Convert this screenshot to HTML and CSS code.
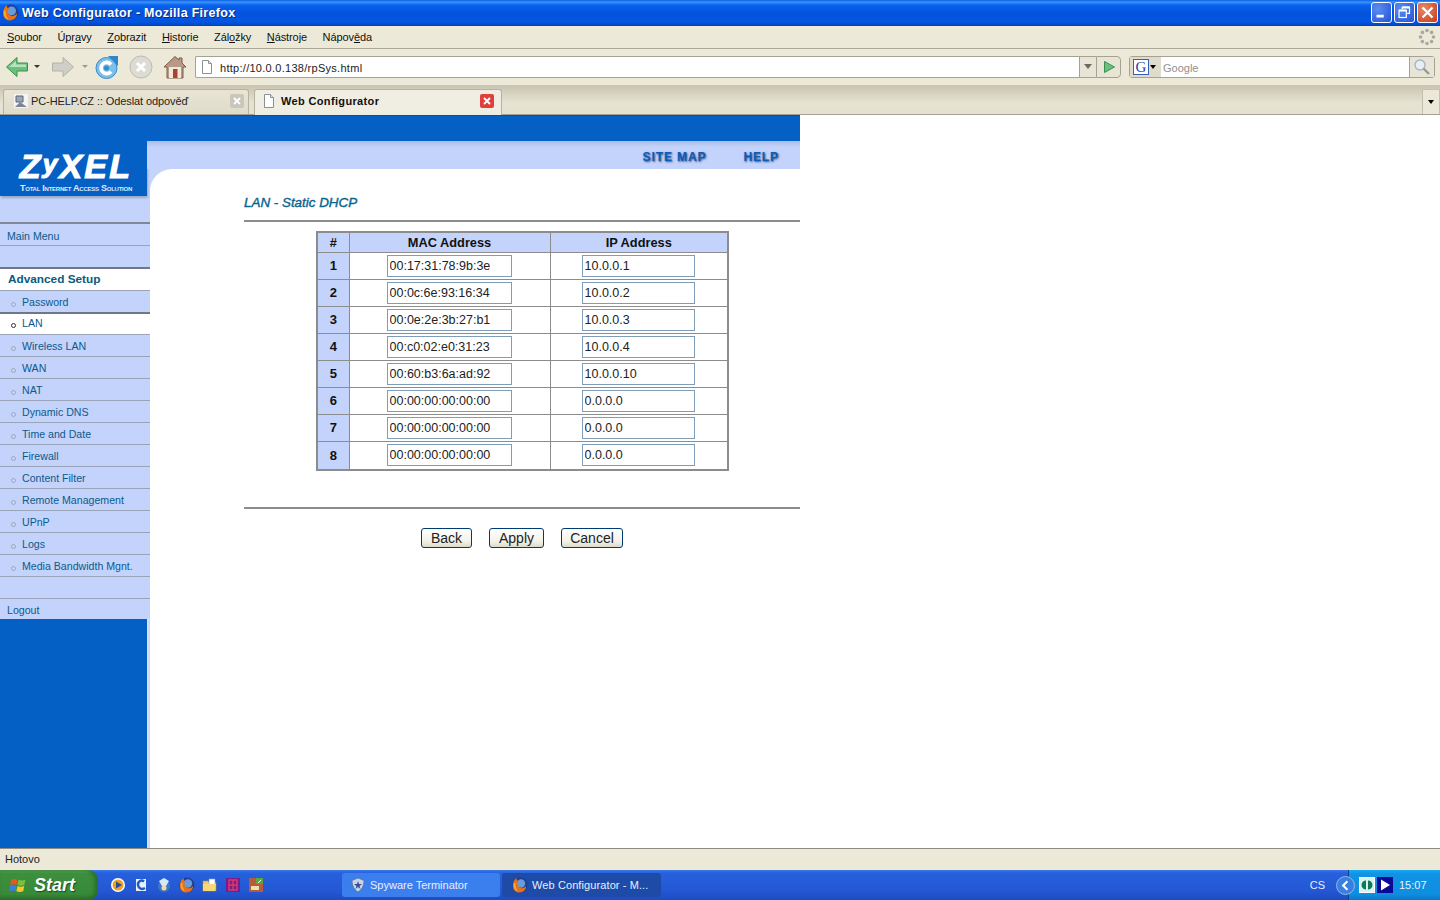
FILE: index.html
```html
<!DOCTYPE html>
<html lang="cs">
<head>
<meta charset="utf-8">
<title>Web Configurator - Mozilla Firefox</title>
<link rel="stylesheet" href="styles.css">
</head>
<body>
<svg class="defs" width="0" height="0" aria-hidden="true">
  <defs>
    <symbol id="fox" viewBox="0 0 16 16">
      <circle cx="8" cy="8" r="7.5" fill="#1c3f8f"/>
      <circle cx="9" cy="6.5" r="4.200" fill="#6a9cdc"/>
      <path d="M1 9C1 4 3 2 5 1 4 3 5 4 7 4 5 5 5 8 7 10c2 2 5 1.500 7-1 .5 3-2.500 6.500-6.500 6.500S1 13 1 9z" fill="#e8701a"/>
      <path d="M2 6c-1 3 0 7 4 8.500C4 12 3 9 3.500 6z" fill="#f6b02c"/>
    </symbol>
    <symbol id="page" viewBox="0 0 16 16">
      <path d="M3.500 1.500h6l3 3v10h-9z" fill="#fff" stroke="#8a8f98"/>
      <path d="M9.500 1.500v3h3" fill="#dfe3ea" stroke="#8a8f98"/>
    </symbol>
  </defs>
</svg>

<div class="window">
  <header class="titlebar">
    <svg class="title-icon"><use href="#fox"/></svg>
    <span class="title-text">Web Configurator - Mozilla Firefox</span>
    <span class="win-btns">
      <span class="win-btn"><svg viewBox="0 0 21 21"><rect x="5" y="13" width="8" height="3" fill="#fff"/></svg></span>
      <span class="win-btn"><svg viewBox="0 0 21 21"><path d="M8 4.500h8v7h-2.500M8 4.500v2.500" fill="none" stroke="#fff" stroke-width="1.300"/><rect x="4.500" y="8" width="8" height="8" fill="none" stroke="#fff" stroke-width="1.300"/><path d="M4.500 8.500h8M8 5h8" stroke="#fff" stroke-width="2"/></svg></span>
      <span class="win-btn win-close"><svg viewBox="0 0 21 21"><path d="M5 5l11 11M16 5L5 16" stroke="#fff" stroke-width="2.400"/></svg></span>
    </span>
  </header>

  <nav class="menubar">
    <span class="menu-item"><u>S</u>oubor</span>
    <span class="menu-item">Úpr<u>a</u>vy</span>
    <span class="menu-item"><u>Z</u>obrazit</span>
    <span class="menu-item"><u>H</u>istorie</span>
    <span class="menu-item">Zál<u>o</u>žky</span>
    <span class="menu-item"><u>N</u>ástroje</span>
    <span class="menu-item">Nápov<u>ě</u>da</span>
    <svg class="throbber" viewBox="0 0 18 18"><g fill="#a8a8a0"><circle cx="9" cy="2.500" r="1.800"/><circle cx="13.600" cy="4.400" r="1.800"/><circle cx="15.500" cy="9" r="1.800"/><circle cx="13.600" cy="13.600" r="1.800"/><circle cx="9" cy="15.500" r="1.800"/><circle cx="4.400" cy="13.600" r="1.800"/><circle cx="2.500" cy="9" r="1.800"/><circle cx="4.400" cy="4.400" r="1.800"/></g></svg>
  </nav>

  <div class="navbar">
    <svg class="tool back" viewBox="0 0 24 24"><path d="M1.500 12L12 2.500V8h10.500v8H12v5.500z" fill="#6cc07c" stroke="#3c8f52"/><path d="M4 12l7-6v3.500h10V12z" fill="#b4e6bc"/></svg>
    <span class="caret caret-dark"></span>
    <svg class="tool fwd" viewBox="0 0 24 24"><path d="M22.500 12L12 2.500V8H1.500v8H12v5.500z" fill="#cfcfc8" stroke="#b2b2aa"/></svg>
    <span class="caret caret-grey"></span>
    <svg class="tool reload" viewBox="0 0 24 24"><circle cx="11.500" cy="13" r="10.500" fill="#7cc0ea" stroke="#3a8cc8"/><path d="M16 9.500A5.600 5.600 0 1 0 16 16.500" fill="none" stroke="#fff" stroke-width="3.600"/><circle cx="11.500" cy="13" r="2.600" fill="#3a8cc8"/><path d="M13 1h10v10z" fill="#2f86c8"/></svg>
    <svg class="tool stop" viewBox="0 0 24 24"><circle cx="12" cy="12" r="11" fill="#dcdcd4" stroke="#bcbcb4"/><path d="M8 8l8 8M16 8l-8 8" stroke="#fff" stroke-width="3"/></svg>
    <svg class="tool home" viewBox="0 0 24 24"><path d="M12 1.500L1 12h3v11h16V12h3l-4-4V3h-3v2z" fill="#b89a84" stroke="#7e5c48"/><rect x="6" y="12" width="12" height="11" fill="#f0e8dc"/><rect x="10" y="14" width="4.500" height="9" fill="#a8442c"/></svg>
    <div class="urlbar">
      <svg class="url-page"><use href="#page"/></svg>
      <span class="url-text">http://10.0.0.138/rpSys.html</span>
      <span class="url-drop"><span class="caret caret-mid"></span></span>
    </div>
    <span class="go-btn"><svg viewBox="0 0 14 14"><path d="M2.500 1.500l10 5.500-10 5.500z" fill="#6cc07c" stroke="#3c8f52"/></svg></span>
    <div class="searchbar">
      <span class="engine"><span class="engine-g">G</span><span class="caret caret-black"></span></span>
      <span class="search-text">Google</span>
      <span class="search-go"><svg viewBox="0 0 18 18"><circle cx="7" cy="7" r="5" fill="#e6eef6" stroke="#a8b4c0" stroke-width="1.400"/><path d="M10.500 10.500l5.500 5.500" stroke="#9a9a92" stroke-width="2.400"/></svg></span>
    </div>
  </div>

  <div class="tabbar">
    <div class="tab tab-off">
      <svg class="tab-icon" viewBox="0 0 16 16"><rect x="1" y="1" width="14" height="14" fill="#f4f4f4"/><path d="M3 3h7v6H3z" fill="#9aa6b8" stroke="#5a6478"/><path d="M2 14l5-5 7 5z" fill="#7a8698"/></svg>
      <span class="tab-label">PC-HELP.CZ :: Odeslat odpověď</span>
      <span class="tab-x tab-x-off"><svg viewBox="0 0 14 14"><path d="M4 4l6 6M10 4l-6 6" stroke="#fff" stroke-width="1.800"/></svg></span>
    </div>
    <div class="tab tab-on">
      <svg class="tab-icon"><use href="#page"/></svg>
      <span class="tab-label">Web Configurator</span>
      <span class="tab-x tab-x-on"><svg viewBox="0 0 14 14"><path d="M4 4l6 6M10 4l-6 6" stroke="#fff" stroke-width="1.800"/></svg></span>
    </div>
    <span class="tab-list"><span class="caret caret-black"></span></span>
  </div>

  <main class="viewport">
    <div class="config">
      <div class="topband"></div>
      <div class="config-body">
        <aside class="sidebar">
          <div class="logo">
            <div class="logo-name">Z<span class="logo-y">y</span>XEL</div>
            <div class="logo-tag">Total Internet Access Solution</div>
          </div>
          <div class="side-gap"></div>
          <div class="side-row first">Main Menu</div>
          <div class="side-row"></div>
          <div class="side-row head">Advanced Setup</div>
          <div class="side-row sub"><i class="dot"></i>Password</div>
          <div class="side-row sub on"><i class="dot"></i>LAN</div>
          <div class="side-row sub"><i class="dot"></i>Wireless LAN</div>
          <div class="side-row sub"><i class="dot"></i>WAN</div>
          <div class="side-row sub"><i class="dot"></i>NAT</div>
          <div class="side-row sub"><i class="dot"></i>Dynamic DNS</div>
          <div class="side-row sub"><i class="dot"></i>Time and Date</div>
          <div class="side-row sub"><i class="dot"></i>Firewall</div>
          <div class="side-row sub"><i class="dot"></i>Content Filter</div>
          <div class="side-row sub"><i class="dot"></i>Remote Management</div>
          <div class="side-row sub"><i class="dot"></i>UPnP</div>
          <div class="side-row sub"><i class="dot"></i>Logs</div>
          <div class="side-row sub"><i class="dot"></i>Media Bandwidth Mgnt.</div>
          <div class="side-row"></div>
          <div class="side-row last">Logout</div>
          <div class="side-fill"></div>
        </aside>
        <section class="content">
          <div class="linkband">
            <span class="band-link">SITE MAP</span>
            <span class="band-link">HELP</span>
          </div>
          <div class="sheet">
            <h1 class="page-title">LAN - Static DHCP</h1>
            <hr class="rule">
            <table class="dhcp">
              <thead>
                <tr><th class="col-n">#</th><th class="col-mac">MAC Address</th><th class="col-ip">IP Address</th></tr>
              </thead>
              <tbody>
                <tr><th>1</th><td class="mac"><input class="field field-mac" value="00:17:31:78:9b:3e"></td><td class="ip"><input class="field field-ip" value="10.0.0.1"></td></tr>
                <tr><th>2</th><td class="mac"><input class="field field-mac" value="00:0c:6e:93:16:34"></td><td class="ip"><input class="field field-ip" value="10.0.0.2"></td></tr>
                <tr><th>3</th><td class="mac"><input class="field field-mac" value="00:0e:2e:3b:27:b1"></td><td class="ip"><input class="field field-ip" value="10.0.0.3"></td></tr>
                <tr><th>4</th><td class="mac"><input class="field field-mac" value="00:c0:02:e0:31:23"></td><td class="ip"><input class="field field-ip" value="10.0.0.4"></td></tr>
                <tr><th>5</th><td class="mac"><input class="field field-mac" value="00:60:b3:6a:ad:92"></td><td class="ip"><input class="field field-ip" value="10.0.0.10"></td></tr>
                <tr><th>6</th><td class="mac"><input class="field field-mac" value="00:00:00:00:00:00"></td><td class="ip"><input class="field field-ip" value="0.0.0.0"></td></tr>
                <tr><th>7</th><td class="mac"><input class="field field-mac" value="00:00:00:00:00:00"></td><td class="ip"><input class="field field-ip" value="0.0.0.0"></td></tr>
                <tr class="row-last"><th>8</th><td class="mac"><input class="field field-mac" value="00:00:00:00:00:00"></td><td class="ip"><input class="field field-ip" value="0.0.0.0"></td></tr>
              </tbody>
            </table>
            <hr class="rule rule-low">
            <div class="actions">
              <button class="btn btn-back">Back</button>
              <button class="btn btn-apply">Apply</button>
              <button class="btn btn-cancel">Cancel</button>
            </div>
          </div>
        </section>
      </div>
    </div>
  </main>

  <div class="statusbar">Hotovo</div>

  <footer class="taskbar">
    <div class="start">
      <svg class="start-flag" viewBox="0 0 18 18"><path d="M2 3.500c2-1 4-1 6 0l-1 5c-2-1-4-1-6 0z" fill="#e8552a"/><path d="M9 3.500c2 1 4 1 6.500 0l-1 5c-2 1-4.500 1-6.500 0z" fill="#7cc040"/><path d="M1 9.500c2-1 4-1 6 0l-1 5c-2-1-4-1-6 0z" fill="#3a80e0"/><path d="M8 9.500c2 1 4 1 6.500 0l-1 5c-2 1-4.500 1-6.500 0z" fill="#f4c828"/></svg>
      <span class="start-text">Start</span>
    </div>
    <div class="quick">
      <svg class="q" viewBox="0 0 16 16"><circle cx="8" cy="8" r="7" fill="#fff"/><circle cx="8" cy="8" r="5.500" fill="#f0a020"/><path d="M6 4.500l6 3.500-6 3.500z" fill="#2a4a9a"/></svg>
      <svg class="q" viewBox="0 0 16 16"><path d="M3 2h10v12H3z" fill="#e8f0fc"/><path d="M11 4.500C8 2 4.500 5 5 8c.5 3.500 4 5 7 3" fill="none" stroke="#1c5cc4" stroke-width="2.400"/></svg>
      <svg class="q" viewBox="0 0 16 16"><circle cx="8" cy="9" r="6" fill="#3c78c0"/><path d="M3 4l5-3 5 3-3 5H6z" fill="#d8e8f8"/><circle cx="8" cy="11" r="2.500" fill="#f4d8a8"/></svg>
      <svg class="q"><use href="#fox"/></svg>
      <svg class="q" viewBox="0 0 16 16"><path d="M1 4h5l1.500 1.500H14V14H1z" fill="#f2cc5c" stroke="#b8902c" stroke-width=".6"/><path d="M7 2h6v8H7z" fill="#fff" stroke="#8aa0c0" stroke-width=".6"/><path d="M1 7h13l-1 7H1z" fill="#f6d878"/></svg>
      <svg class="q" viewBox="0 0 16 16"><rect x="1" y="1" width="14" height="14" fill="#7c1c8c"/><path d="M4 3h8v10H4zM4 8h8M8 3v10" fill="none" stroke="#d83a6a" stroke-width="1.400"/></svg>
      <svg class="q" viewBox="0 0 16 16"><rect x="1" y="1" width="14" height="14" fill="#b85a3c"/><rect x="8" y="1" width="7" height="6" fill="#5aa83c"/><rect x="3" y="9" width="8" height="4" fill="#e8e0b0"/><path d="M10 6l3-3" stroke="#fff"/></svg>
    </div>
    <div class="task task-idle">
      <svg class="task-icon" viewBox="0 0 16 16"><path d="M8 1l6 2.500c0 5-2 9-6 11.500C4 12.500 2 8.500 2 3.500z" fill="#c8d4e8" stroke="#5a6a90" stroke-width=".7"/><path d="M8 4l1 3h3l-2.500 2 1 3L8 10l-2.500 2 1-3L4 7h3z" fill="#34508c"/></svg>
      <span>Spyware Terminator</span>
    </div>
    <div class="task task-active">
      <svg class="task-icon"><use href="#fox"/></svg>
      <span>Web Configurator - M...</span>
    </div>
    <span class="lang">CS</span>
    <div class="tray">
      <span class="tray-toggle"><svg viewBox="0 0 18 18"><path d="M11 4.500L6.500 9l4.500 4.500" fill="none" stroke="#fff" stroke-width="2.200"/></svg></span>
      <svg class="tray-a" viewBox="0 0 16 16"><rect x=".5" y=".5" width="15" height="15" fill="#d8f4ee" stroke="#fff"/><path d="M7 3.500a4.500 4.500 0 0 0 0 9zM9 3.500a4.500 4.500 0 0 1 0 9z" fill="#0e7a5c"/></svg>
      <svg class="tray-b" viewBox="0 0 16 16"><rect width="16" height="16" fill="#0a0a96"/><path d="M4 2.500L13 8l-9 5.500z" fill="#fff"/></svg>
      <span class="clock">15:07</span>
    </div>
  </footer>
</div>
</body>
</html>
```

FILE: styles.css
```css
* { box-sizing: border-box; }
html, body { margin: 0; height: 100%; overflow: hidden; }
body { font-family: "Liberation Sans", Arial, sans-serif; font-size: 11px; background: #fff; color: #000; }
.defs { position: absolute; }
.window { width: 1440px; height: 900px; display: flex; flex-direction: column; }

/* title bar */
.titlebar { height: 26px; flex: none; display: flex; align-items: center; padding: 0 2px 1px 2px;
  background: linear-gradient(#0a5fe0 0, #3d95ff 2px, #0a62ec 5px, #0353dc 13px, #0355e2 22px, #0041b8 26px); }
.title-icon { width: 17px; height: 17px; margin-right: 3px; }
.title-text { color: #fff; font: bold 12.5px "Liberation Sans", sans-serif; letter-spacing: .3px; text-shadow: 1px 1px 0 #0a2a80; }
.win-btns { margin-left: auto; display: flex; gap: 2px; }
.win-btn { width: 21px; height: 21px; border: 1px solid #fff; border-radius: 3px; background: radial-gradient(circle at 30% 30%, #5b8df0, #2353d8); display: block; }
.win-btn svg { display: block; width: 19px; height: 19px; }
.win-close { background: radial-gradient(circle at 30% 30%, #e8896a, #c93a16); }

/* menu bar */
.menubar { height: 23px; flex: none; display: flex; align-items: center; background: #ece9d8; border-bottom: 1px solid #aca899; padding: 0 0 1px 7px; gap: 15.6px; font-size: 11px; letter-spacing: -.1px; color: #111; }
.throbber { margin-left: auto; width: 18px; height: 18px; margin-right: 4px; }

/* navigation */
.navbar { height: 37px; flex: none; display: flex; align-items: center; background: #ece9d8; border-bottom: 1px solid #c9c6b5; padding: 0 0 1px 5px; }
.tool { width: 24px; height: 24px; flex: none; }
.back { margin-right: 5px; }
.fwd { margin-left: 11px; width: 24px; }
.reload { margin-left: 7px; }
.stop { margin-left: 10px; }
.home { margin-left: 10px; }
.caret { display: block; width: 0; height: 0; border-left: 3px solid transparent; border-right: 3px solid transparent; border-top: 3px solid #333; }
.caret-dark { border-top-color: #333; }
.caret-grey { margin-left: 7px; border-top-color: #999; }
.caret-mid { border-left-width: 4px; border-right-width: 4px; border-top: 5px solid #6a6a60; }
.caret-black { border-top-color: #000; border-left-width: 3.500px; border-right-width: 3.500px; border-top-width: 4px; }
.urlbar { margin-left: 8px; width: 901px; height: 22px; display: flex; align-items: center; background: #fff; border: 1px solid #a5a294; border-right: none; border-radius: 2px 0 0 2px; }
.url-page { width: 16px; height: 16px; margin-left: 3px; }
.url-text { margin-left: 5px; padding-top: 2px; font-size: 11px; letter-spacing: .28px; color: #222; }
.url-drop { margin-left: auto; width: 17px; height: 20px; border-left: 1px solid #a5a294; background: #e8e5d6; display: flex; align-items: center; justify-content: center; }
.go-btn { width: 25px; height: 22px; display: flex; align-items: center; justify-content: center; background: #e8e5d6; border: 1px solid #a5a294; border-radius: 0 4px 4px 0; }
.go-btn svg { width: 14px; height: 14px; }
.searchbar { margin-left: 8px; width: 306px; height: 22px; display: flex; align-items: stretch; background: #fff; border: 1px solid #a5a294; border-radius: 3px; }
.engine { width: 31px; flex: none; display: flex; align-items: center; background: #dfdccd; gap: 1px; padding-left: 3px; }
.engine-g { width: 16px; height: 16px; display: block; background: #fff; border: 1px solid #3b5fb8; color: #1f3fa8; font: 15px/14px "Liberation Serif", serif; text-align: center; }
.search-text { flex: 1; padding-left: 2px; padding-top: 1px; line-height: 20px; color: #8f8f8f; font-size: 11px; }
.search-go { width: 25px; flex: none; background: #e8e5d6; border-left: 1px solid #a5a294; display: flex; align-items: center; justify-content: center; }
.search-go svg { width: 18px; height: 18px; }

/* tabs */
.tabbar { height: 29px; flex: none; display: flex; align-items: flex-end; padding-left: 3px; gap: 5px; background: linear-gradient(#c9c5b2, #e6e3d2 60%, #e4e1d0); border-bottom: 1px solid #a5a294; }
.tab { height: 25px; display: flex; align-items: center; border: 1px solid #b5b2a2; border-bottom: none; border-radius: 3px 3px 0 0; padding-bottom: 3px; }
.tab-off { width: 246px; background: linear-gradient(#e8e5d6, #dedbca); padding-left: 9px; padding-right: 4px; margin-top: 2px; }
.tab-on { width: 248px; height: 26px; background: #f0eee2; padding-left: 6px; padding-right: 7px; margin-bottom: -1px; }
.tab-icon { width: 16px; height: 16px; flex: none; }
.tab-label { margin-left: 2px; font-size: 11px; letter-spacing: -.1px; color: #222; white-space: nowrap; }
.tab-on .tab-icon { margin-right: 2px; }
.tab-on .tab-label { font-weight: bold; color: #111; letter-spacing: .35px; }
.tab-x { margin-left: auto; width: 14px; height: 14px; border-radius: 2px; display: block; }
.tab-x svg { display: block; width: 14px; height: 14px; }
.tab-x-off { background: #c9c6ba; }
.tab-x-on { background: #e0403c; border: 0; }
.tab-list { margin-left: auto; width: 18px; height: 25px; display: flex; align-items: center; justify-content: center; background: #ebe8d9; border: 1px solid #c4c1b0; border-bottom: none; }

/* page */
.viewport { flex: 1; min-height: 0; background: #fff; border-bottom: 1px solid #8e8c80; }
.config { width: 800px; height: 100%; display: flex; flex-direction: column; overflow: visible; }
.topband { height: 26px; flex: none; background: #0460c4; border-top: 1px solid #0a4f96; }
.config-body { flex: 1; min-height: 0; display: flex; }

.sidebar { width: 150px; flex: none; display: flex; flex-direction: column; background: #c3d3fb; }
.logo { height: 55px; width: 147px; flex: none; background: #0460c4; color: #fff; text-align: center; box-shadow: 1px 2px 2px #9aa9c8; padding-top: 7px; }
.logo-name { font: italic bold 34px/32px "Liberation Sans", sans-serif; letter-spacing: 2.200px; -webkit-text-stroke: 1.1px #fff; margin-left: 5px; }
.logo-y { font-size: 26px; vertical-align: 5px; }
.logo-tag { font: bold 9px/10px "Liberation Sans", sans-serif; font-variant: small-caps; letter-spacing: -.25px; margin-top: 1px; margin-left: 5px; white-space: nowrap; color: #dfe8f8; }
.side-gap { height: 26px; flex: none; }
.side-row { height: 22px; flex: none; border-top: 1px solid #9aa4b8; padding-left: 7px; color: #0a5a8c; font-size: 10.6px; line-height: 23px; white-space: nowrap; }
.side-row.first { border-top: 2px solid #808898; height: 23px; line-height: 24px; }
.side-row.head { height: 23px; border-top: 2px solid #707888; background: #fff; font-weight: bold; font-size: 11.8px; line-height: 20px; padding-left: 8px; color: #0a5a80; }
.side-row.sub { padding-left: 11px; }
.side-row.on { background: #fff; border-top: 2px solid #707888; color: #0a5a8c; line-height: 19px; }
.side-row.last { height: 21px; }
.dot { display: inline-block; width: 5px; height: 5px; border: 1px solid #a0a8b8; border-radius: 50%; margin-right: 6px; vertical-align: -1px; }
.on .dot { border-color: #333; }
.side-fill { flex: 1; background: linear-gradient(90deg, #0460c4 147px, #dde4f6 147px, #c8d4f0 150px); }

.content { flex: 1; min-width: 0; display: flex; flex-direction: column; position: relative; background: #c3d3fb; }
.linkband { height: 28px; flex: none; display: flex; justify-content: flex-end; align-items: center; gap: 37px; padding-right: 21px; background: linear-gradient(#a9bde6 0, #c3d3fb 6px); margin-left: -3px; padding-top: 3px; }
.band-link { color: #0a5cb8; font: bold 12px "Liberation Sans", sans-serif; letter-spacing: .9px; text-shadow: 1px 1px 2px #2a4a80; }
.sheet { flex: 1; min-height: 0; background: #fff; border-radius: 22px 0 0 0; padding-left: 94px; }
.page-title { margin: 0; padding-top: 26px; height: 51px; font: italic 13.4px/16px "Liberation Sans", sans-serif; color: #0a6490; -webkit-text-stroke: .4px #0a6490; }
.rule { margin: 0; height: 2px; border: 0; background: #8c8c8c; width: 556px; }
.dhcp { margin: 9px 0 0 72px; width: 411px; border-collapse: collapse; border: 2px solid #8c8c8c; table-layout: fixed; }
.dhcp th, .dhcp td { border: 1px solid #8c8c8c; padding: 0; height: 27px; }
.dhcp thead th { height: 20px; background: #c3d3fb; font: bold 12.8px/15px "Liberation Sans", sans-serif; color: #111; }
.dhcp tbody th { background: #c3d3fb; font: bold 13px/15px "Liberation Sans", sans-serif; color: #111; }
.dhcp .row-last th, .dhcp .row-last td { height: 29px; }
.col-n { width: 32px; }
.col-mac { width: 201px; }
.col-ip { width: 178px; }
.mac { padding-left: 37px !important; }
.ip { padding-left: 31px !important; }
.field { display: block; height: 22px; border: 1px solid #7f9db9; background: #fff; padding: 0 2px; font: 12.500px "Liberation Sans", sans-serif; color: #222; border-radius: 0; }
.field-mac { width: 125px; }
.field-ip { width: 113px; }
.rule-low { margin-top: 36px; }
.actions { display: flex; gap: 17px; padding: 19px 0 0 177px; align-items: flex-start; }
.btn { height: 20px; padding: 0; border: 1px solid #003c74; border-radius: 3px; background: linear-gradient(#fff, #f2f1e8 70%, #dcd9c8); font: 14px "Liberation Sans", sans-serif; color: #222; }
.btn-back { width: 51px; }
.btn-apply { width: 55px; }
.btn-cancel { width: 62px; }

/* status */
.statusbar { height: 21px; flex: none; background: #ece9d8; padding-left: 5px; line-height: 20px; font-size: 11px; color: #222; }

/* taskbar */
.taskbar { height: 30px; flex: none; display: flex; align-items: center; background: linear-gradient(#3a7ae8 0, #2760dc 3px, #2458d4 20px, #1e4cc0 30px); color: #fff; position: relative; }
.start { width: 98px; height: 30px; flex: none; display: flex; align-items: center; background: linear-gradient(#5aa85a 0, #3c8f3c 4px, #388a38 24px, #2a702a); border-radius: 0 10px 10px 0; padding-left: 9px; box-shadow: inset -3px 0 4px #2a6a2a; }
.start-flag { width: 19px; height: 19px; margin-right: 6px; }
.start-text { font: italic bold 18px "Liberation Sans", sans-serif; color: #fff; text-shadow: 1px 1px 1px #1c4a1c; }
.quick { display: flex; gap: 7px; margin-left: 12px; }
.q { width: 16px; height: 16px; display: block; }
.task { height: 24px; display: flex; align-items: center; font-size: 11px; border-radius: 3px; flex: none; color: #e8eeff; white-space: nowrap; }
.task-icon { width: 16px; height: 16px; margin-right: 4px; flex: none; }
.task-idle { width: 158px; margin-left: 78px; background: #3b7fef; padding-left: 8px; }
.task-active { width: 159px; margin-left: 2px; background: #1e4ba8; padding-left: 10px; letter-spacing: .1px; }
.lang { margin-left: auto; margin-right: 23px; font-size: 11px; color: #e8f0ff; }
.tray { width: 92px; height: 30px; flex: none; display: flex; align-items: center; background: linear-gradient(#18a8f0 0, #0f93e4 4px, #0f8ee0 24px, #0a78c8); border-left: 1px solid #0c3c90; position: relative; }
.tray-toggle { width: 19px; height: 19px; border-radius: 50%; background: #3a7ee0; border: 1px solid #8cb8f0; margin-left: -13px; display: block; flex: none; }
.tray-toggle svg { display: block; width: 17px; height: 17px; }
.tray-a { width: 16px; height: 16px; margin-left: 4px; }
.tray-b { width: 16px; height: 16px; margin-left: 2px; }
.clock { margin-left: 6px; font-size: 11px; color: #eaf4ff; }
```
